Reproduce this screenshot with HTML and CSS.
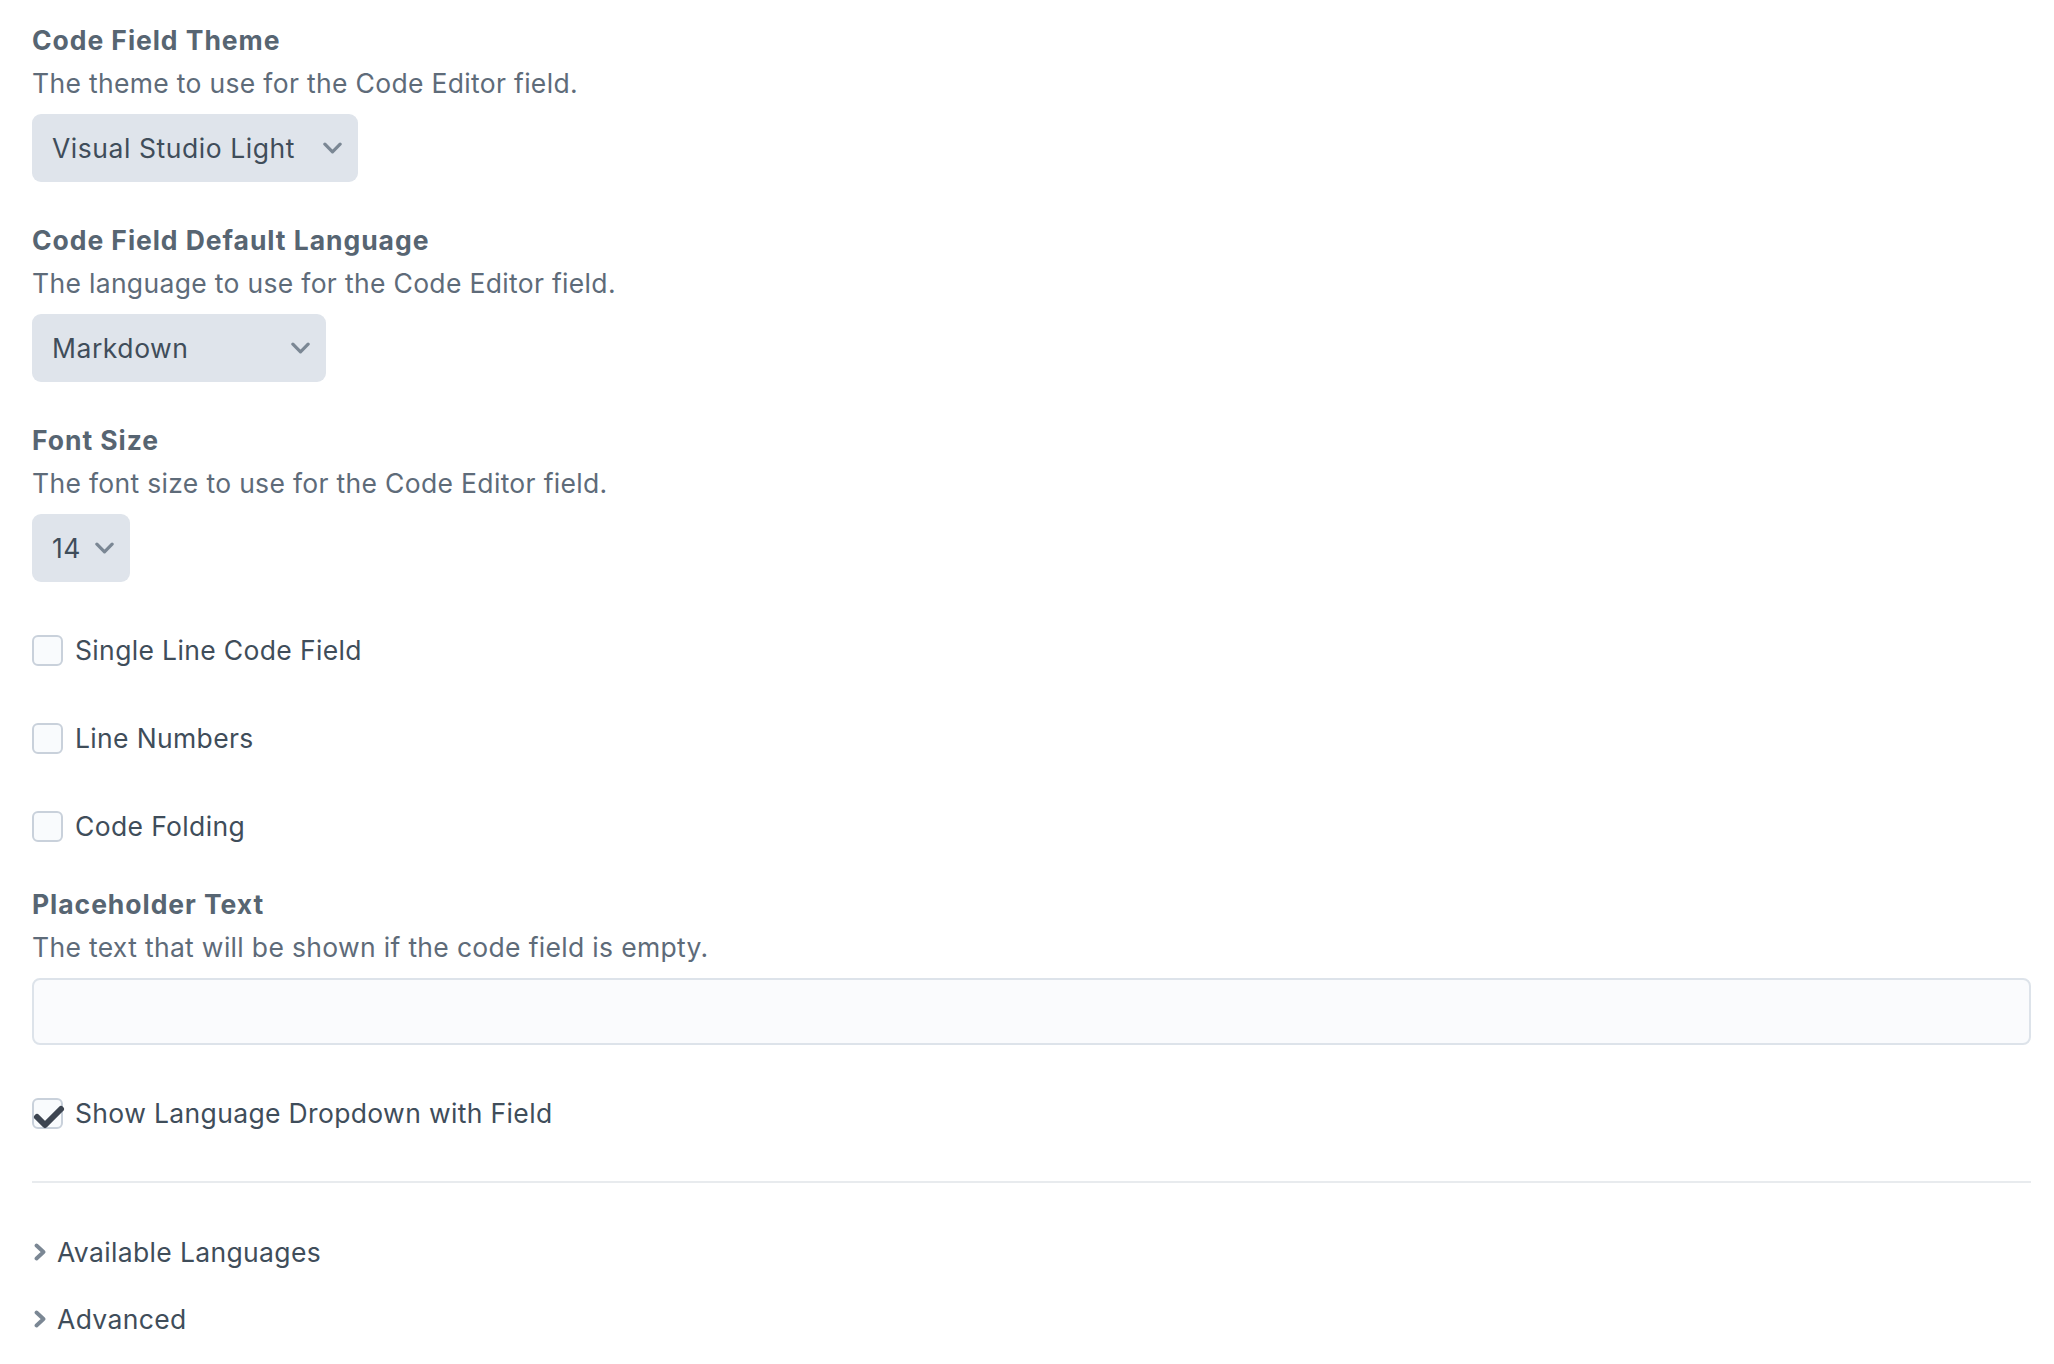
FILE: index.html
```html
<!DOCTYPE html>
<html lang="en">
<head>
<meta charset="utf-8">
<title>Code Field Settings</title>
<link rel="stylesheet" href="styles.css">
</head>
<body>
<div class="page">
  <div class="field">
    <div class="heading">Code Field Theme</div>
    <div class="desc">The theme to use for the Code Editor field.</div>
    <div class="select select-theme"><span>Visual Studio Light</span><svg class="chev" viewBox="0 0 20 12"><polyline points="2,2 10,10 18,2"/></svg></div>
  </div>
  <div class="field">
    <div class="heading">Code Field Default Language</div>
    <div class="desc">The language to use for the Code Editor field.</div>
    <div class="select select-lang"><span>Markdown</span><svg class="chev" viewBox="0 0 20 12"><polyline points="2,2 10,10 18,2"/></svg></div>
  </div>
  <div class="field">
    <div class="heading">Font Size</div>
    <div class="desc">The font size to use for the Code Editor field.</div>
    <div class="select select-size"><span>14</span><svg class="chev" viewBox="0 0 20 12"><polyline points="2,2 10,10 18,2"/></svg></div>
  </div>
  <div class="checks">
    <label class="check"><span class="box"></span>Single Line Code Field</label>
    <label class="check"><span class="box"></span>Line Numbers</label>
    <label class="check"><span class="box"></span>Code Folding</label>
  </div>
  <div class="field field-text">
    <div class="heading">Placeholder Text</div>
    <div class="desc">The text that will be shown if the code field is empty.</div>
    <div class="input"></div>
  </div>
  <label class="check check-on"><span class="box"><svg viewBox="0 0 31 31"><polyline points="5,19 13,27 29,11"/></svg></span>Show Language Dropdown with Field</label>
  <hr class="rule">
  <div class="toggles">
    <div class="toggle"><svg class="arrow" viewBox="0 0 12 18"><polyline points="2.5,2.5 9.5,9 2.5,15.5"/></svg>Available Languages</div>
    <div class="toggle"><svg class="arrow" viewBox="0 0 12 18"><polyline points="2.5,2.5 9.5,9 2.5,15.5"/></svg>Advanced</div>
  </div>
</div>
</body>
</html>
```
FILE: styles.css
```css
html, body {
  margin: 0;
  padding: 0;
  background: #ffffff;
}
body {
  font-family: Inter, "Noto Sans", sans-serif;
  font-size: 26.5px;
  letter-spacing: 0.35px;
  color: #3f4d5a;
}
.page {
  display: flex;
  flex-direction: column;
  padding: 22px 23px 0 32px;
}
.field {
  display: flex;
  flex-direction: column;
  align-items: flex-start;
  margin-bottom: 40px;
}
.heading {
  font-weight: 700;
  line-height: 36px;
  letter-spacing: 0.95px;
  color: #576572;
}
.desc {
  margin-top: 7px;
  line-height: 36px;
  letter-spacing: 0.32px;
  color: #5e6b79;
}
.select {
  margin-top: 13px;
  height: 68px;
  box-sizing: border-box;
  padding: 0 16px 0 20px;
  background: #dfe4eb;
  border-radius: 9px;
  display: flex;
  align-items: center;
  justify-content: space-between;
  letter-spacing: 0.55px;
  color: #3f4d5a;
}
.select-theme { width: 326px; }
.select-lang { width: 294px; }
.select-size { width: 98px; }
.chev {
  width: 19px;
  height: 12px;
  fill: none;
  stroke: #7b8794;
  stroke-width: 3.4;
  stroke-linecap: round;
  stroke-linejoin: round;
}
.checks {
  display: flex;
  flex-direction: column;
  gap: 52px;
  margin-top: 10px;
  margin-bottom: 42px;
}
.check {
  display: flex;
  align-items: center;
  gap: 12px;
  height: 36px;
  color: #3f4d5a;
}
.box {
  width: 31px;
  height: 31px;
  box-sizing: border-box;
  border: 2px solid #c9d1db;
  border-radius: 6px;
  background: #f9fbfd;
  position: relative;
  flex: none;
}
.box svg {
  position: absolute;
  left: -2px;
  top: -2px;
  width: 31px;
  height: 31px;
  fill: none;
  stroke: #3d4551;
  stroke-width: 6;
  stroke-linecap: round;
  stroke-linejoin: round;
  overflow: visible;
}
.field-text {
  align-items: stretch;
  margin-bottom: 50px;
}
.input {
  margin-top: 13px;
  height: 67px;
  box-sizing: border-box;
  border: 2px solid #dde3ea;
  border-radius: 8px;
  background: #fafbfd;
}
.rule {
  margin: 50px 0 0 0;
  border: 0;
  height: 2px;
  background: #e8ebee;
}
.toggles {
  display: flex;
  flex-direction: column;
  gap: 31px;
  margin-top: 51px;
}
.toggle {
  display: flex;
  align-items: center;
  line-height: 36px;
  color: #3f4d5a;
}
.arrow {
  width: 12px;
  height: 18px;
  margin: 0 11px 0 2px;
  fill: none;
  stroke: #7b8794;
  stroke-width: 3.8;
  stroke-linecap: round;
  stroke-linejoin: round;
}
```
